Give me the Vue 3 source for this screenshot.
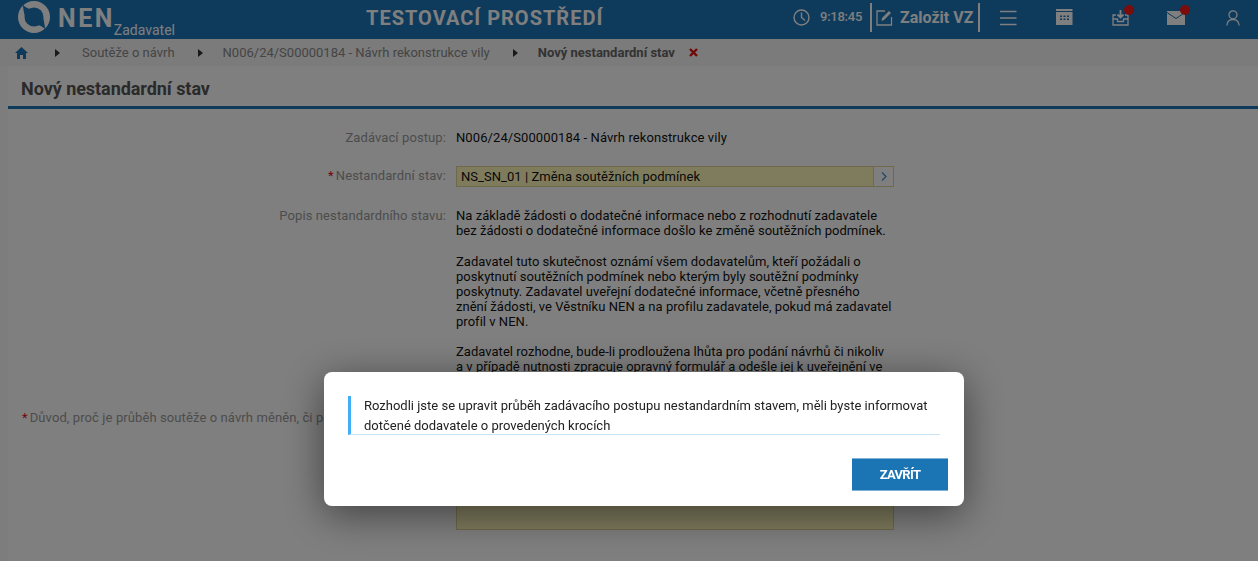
<script setup>
const crumbs = ['Soutěže o návrh', 'N006/24/S00000184 - Návrh rekonstrukce vily']
</script>

<template>
  <div class="page">
    <header class="top">
      <div class="brand">
        <svg class="logo" width="34" height="34" viewBox="0 0 34 34">
          <circle cx="17" cy="17" r="16" fill="#fff"/>
          <circle cx="17" cy="17" r="9.500" fill="#1c74b8"/>
          <path d="M5.500 4.500C6.500 8 6.500 12 8 16.500C9 13 11 10.500 13.500 9C10.500 8.500 8 7 5.500 4.500Z" fill="#1c74b8"/>
          <path d="M28.500 29.500C27.500 26 27.500 22 26 17.500C25 21 23 23.500 20.500 25C23.500 25.500 26 27 28.500 29.500Z" fill="#1c74b8"/>
        </svg>
        <span class="nen">NEN</span>
        <span class="role">Zadavatel</span>
      </div>
      <div class="env">TESTOVACÍ PROSTŘEDÍ</div>
      <div class="tools">
        <svg class="clock" width="17" height="17" viewBox="0 0 17 17" fill="none" stroke="#fff" stroke-width="1.400">
          <circle cx="8.500" cy="8.500" r="7.500"/>
          <path d="M8.500 3.500V8.500L12 11.500"/>
        </svg>
        <span class="time">9:18:45</span>
        <div class="create">
          <svg width="17" height="17" viewBox="0 0 17 17" fill="none" stroke="#fff" stroke-width="1.300">
            <path d="M15.500 8V16H1V2H9"/>
            <path d="M5.500 12L6 9L13 2L15 4L8 11Z" fill="#fff" stroke="none"/>
          </svg>
          <span>Založit VZ</span>
        </div>
        <svg class="ic ic-menu" width="17" height="16" viewBox="0 0 17 16" stroke="#fff" stroke-width="1.500">
          <path d="M0 1.500H16.500M0 8H16.500M0 14.500H16.500"/>
        </svg>
        <svg class="ic ic-cal" width="17" height="17" viewBox="0 0 17 17" fill="#fff">
          <path d="M0 0H16.500V2H0ZM0 3H16.500V16H0Z"/>
          <path d="M4 6.500H6V8H4ZM7.500 6.500H9.500V8H7.500ZM11 6.500H13V8H11ZM4 9.500H6V11H4ZM7.500 9.500H9.500V11H7.500ZM11 9.500H13V11H11Z" fill="#1c74b8"/>
        </svg>
        <div class="ic ic-in">
          <svg width="17" height="17" viewBox="0 0 17 17" fill="none" stroke="#fff" stroke-width="1.300">
            <path d="M4 6H1V16H16V6H13"/>
            <path d="M1 10H5.500V12.500H11.500V10H16"/>
            <path d="M8.500 1V8.500M5.500 5.500L8.500 8.500L11.500 5.500" stroke-width="1.800"/>
          </svg>
          <i class="dot"></i>
        </div>
        <div class="ic ic-mail">
          <svg width="18" height="14" viewBox="0 0 18 14">
            <path d="M0 0H18V14H0Z" fill="#fff"/>
            <path d="M0 1.500L9 7.500L18 1.500" fill="none" stroke="#1c74b8" stroke-width="1"/>
          </svg>
          <i class="dot"></i>
        </div>
        <svg class="ic ic-user" width="14" height="16" viewBox="0 0 14 16" fill="none" stroke="#fff" stroke-width="1.300">
          <circle cx="7" cy="4.800" r="4"/>
          <path d="M.800 15.500C1.200 11.500 3.500 9.500 7 9.500C10.500 9.500 12.800 11.500 13.200 15.500"/>
        </svg>
      </div>
    </header>

    <nav class="crumbs">
      <svg class="home" width="13" height="12" viewBox="0 0 13 12" fill="#1c74b8">
        <path d="M6.500 0L13 6H11V12H8V8H5V12H2V6H0Z"/>
      </svg>
      <span class="arrow first"></span>
      <template v-for="c in crumbs" :key="c">
        <span class="crumb">{{ c }}</span>
        <span class="arrow"></span>
      </template>
      <strong class="current">Nový nestandardní stav</strong>
      <svg class="close-x" width="9" height="9" viewBox="0 0 9 9" stroke="#e01010" stroke-width="2.400">
        <path d="M1 1L8 8M8 1L1 8"/>
      </svg>
    </nav>

    <main class="content">
      <h1 class="title">Nový nestandardní stav</h1>
      <div class="form">
        <div class="row r-proc">
          <label class="lbl">Zadávací postup:</label>
          <div class="val proc">N006/24/S00000184 - Návrh rekonstrukce vily</div>
        </div>
        <div class="row r-state">
          <label class="lbl"><b class="req">*</b>Nestandardní stav:</label>
          <div class="select">
            <span>NS_SN_01 | Změna soutěžních podmínek</span>
            <span class="sel-btn">
              <svg width="6" height="9" viewBox="0 0 6 9" fill="none" stroke="#3f8fd0" stroke-width="1.200"><path d="M1 .5L5 4.500L1 8.500"/></svg>
            </span>
          </div>
        </div>
        <div class="row r-desc">
          <label class="lbl">Popis nestandardního stavu:</label>
          <div class="val desc">
            <p>Na základě žádosti o dodatečné informace nebo z rozhodnutí zadavatele bez žádosti o dodatečné informace došlo ke změně soutěžních podmínek.</p>
            <p>Zadavatel tuto skutečnost oznámí všem dodavatelům, kteří požádali o poskytnutí soutěžních podmínek nebo kterým byly soutěžní podmínky poskytnuty. Zadavatel uveřejní dodatečné informace, včetně přesného znění žádosti, ve Věstníku NEN a na profilu zadavatele, pokud má zadavatel profil v NEN.</p>
            <p>Zadavatel rozhodne, bude-li prodloužena lhůta pro podání návrhů či nikoliv a v případě nutnosti zpracuje opravný formulář a odešle jej k uveřejnění ve</p>
          </div>
        </div>
        <div class="row r-reason">
          <label class="lbl reason"><b class="req">*</b>Důvod, proč je průběh soutěže o návrh měněn, či pr</label>
          <div class="area"></div>
        </div>
      </div>
    </main>

    <div class="overlay">
      <section class="modal">
        <div class="info">Rozhodli jste se upravit průběh zadávacího postupu nestandardním stavem, měli byste informovat dotčené dodavatele o provedených krocích</div>
        <div class="actions"><button class="btn">ZAVŘÍT</button></div>
      </section>
    </div>
  </div>
</template>

<style>
html, body { margin: 0; height: 100%; overflow: hidden; background: #f8f8f8; }
</style>

<style scoped>
* { box-sizing: border-box; }
.page { height: 561px; overflow: hidden; font: 13px/15.250px Roboto, "Liberation Sans", sans-serif; color: #111; background: #fafafa; }
.top { height: 39px; background: #1c74b8; color: #fff; display: flex; align-items: flex-start; }
.brand { width: 366px; height: 39px; padding-left: 17px; display: flex; align-items: flex-start; }
.logo { margin-top: 0; flex: none; }
.nen { margin-left: 7px; margin-top: 4px; font-size: 25px; line-height: 29px; font-weight: 700; letter-spacing: 2.500px; }
.role { margin-left: -1px; margin-top: 22px; font-size: 14px; line-height: 16px; }
.env { width: 427px; font-size: 20px; line-height: 36px; font-weight: 700; letter-spacing: 1px; }
.tools { flex: 1; display: flex; align-items: flex-start; position: relative; height: 39px; }
.clock { margin-top: 9px; }
.time { margin-left: 10px; margin-top: 9px; width: 42px; font-weight: 500; font-size: 13px; letter-spacing: -.25px; white-space: nowrap; }
.create { margin-left: 8px; margin-top: 3px; height: 29px; width: 110px; border-left: 2px solid #fff; border-right: 2px solid #fff; display: flex; align-items: center; padding-left: 4px; gap: 7px; font-size: 16px; font-weight: 700; white-space: nowrap; }
.ic { flex: none; position: relative; }
.ic-menu { margin-left: 20px; margin-top: 10px; }
.ic-cal { margin-left: 39px; margin-top: 9px; }
.ic-in { margin-left: 39px; margin-top: 9px; width: 17px; height: 17px; }
.ic-in svg, .ic-mail svg { display: block; }
.ic-mail { margin-left: 38px; margin-top: 11px; width: 18px; height: 14px; }
.ic-user { margin-left: 41px; margin-top: 10px; }
.dot { position: absolute; width: 10px; height: 10px; border-radius: 50%; background: #f41818; right: -5px; top: -4px; }
.ic-mail .dot { right: -5px; top: -6px; }

.crumbs { height: 27px; background: #f6f6f6; display: flex; align-items: center; padding-left: 15px; color: #8a8a8a; }
.home { flex: none; }
.arrow { width: 0; height: 0; border-left: 5px solid #333; border-top: 4px solid transparent; border-bottom: 4px solid transparent; margin: 0 20px 0 23px; }
.arrow.first { margin: 0 22px 0 27px; }
.crumb { white-space: nowrap; }
.current { color: #666; font-weight: 700; }
.close-x { margin-left: 14px; }

.content { margin-left: 8px; background: #fff; height: 495px; }
.title { margin: 0; height: 43px; padding: 12px 0 0 13px; font-size: 18px; line-height: 22px; font-weight: 700; color: #555; letter-spacing: -.05px; border-bottom: 3px solid #1c74b8; }
.row { display: flex; }
.lbl { width: 438px; text-align: right; color: #999; font-weight: 400; flex: none; letter-spacing: .1px; }
.req { color: #e01010; margin-right: 2px; font-weight: 400; }
.val { margin-left: 10px; width: 437px; color: #111; flex: none; }
.proc { letter-spacing: .09px; }
.desc { letter-spacing: .03px; line-height: 15.100px; }
.r-proc { margin-top: 21px; }
.r-state { margin-top: 21px; }
.r-state .lbl { padding-top: 2px; }
.select { margin-left: 10px; width: 438px; height: 21px; background: #fff8bc; border: 1px solid #dcd394; display: flex; justify-content: space-between; align-items: center; padding-left: 4px; flex: none; font-size: 13px; letter-spacing: .05px; }
.sel-btn { width: 20px; height: 19px; border-left: 1px solid #dcd394; background: #fff; display: flex; align-items: center; justify-content: center; }
.r-desc { margin-top: 21px; }
.desc p { margin: 0 0 15.100px; }
.r-reason { margin-top: 15px; }
.lbl.reason { text-align: left; padding-left: 14px; white-space: nowrap; overflow: hidden; padding-top: 6px; }
.area { margin-left: 10px; width: 438px; height: 126px; background: #fff8bc; border: 1px solid #dcd394; flex: none; }

.overlay { position: fixed; inset: 0; background: rgba(0, 0, 0, .5); display: flex; align-items: flex-start; justify-content: flex-start; padding: 372px 0 0 324px; }
.modal { width: 640px; height: 134px; background: #fff; border-radius: 8px; padding: 24px 16px 0 24px; box-shadow: 0 8px 40px rgba(0, 0, 0, .5); }
.info { width: 592px; height: 39px; border-left: 3px solid #42aef5; border-bottom: 1px solid #c9e6f8; padding-left: 13px; font-size: 13px; line-height: 20px; color: #222; }
.actions { display: flex; justify-content: flex-end; margin-top: 23px; }
.btn { width: 96px; height: 33px; background: #1b75b5; border: 0; border-top: 1px solid #7fb2d6; border-bottom: 1px solid #7fb2d6; color: #fff; font: 700 13px Roboto, sans-serif; letter-spacing: -.7px; padding: 0; }
</style>
